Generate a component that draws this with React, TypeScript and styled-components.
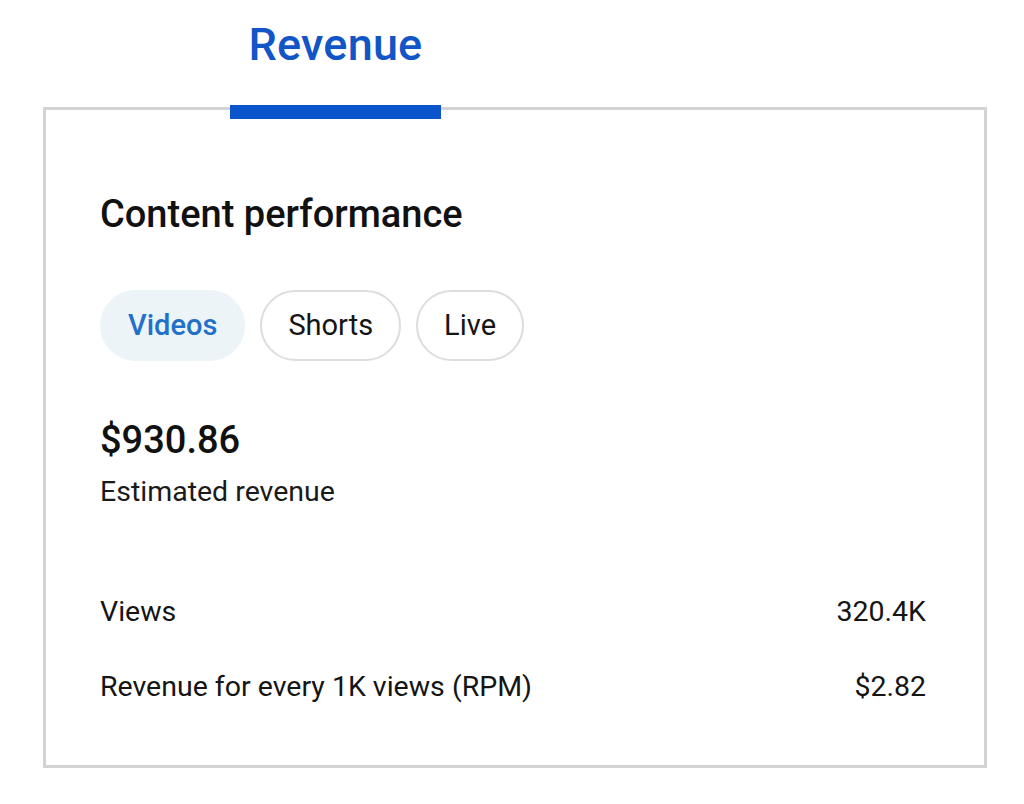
import * as React from 'react'
import styled, { createGlobalStyle } from 'styled-components'

const GlobalStyle = createGlobalStyle`
  html, body {
    margin: 0;
    padding: 0;
    background: #ffffff;
  }
  body {
    font-family: Roboto, 'Noto Sans', 'Liberation Sans', sans-serif;
    color: #141414;
  }
`

const Page = styled.div`
  width: 1024px;
  height: 804px;
  padding-left: 43px;
  box-sizing: border-box;
  display: flex;
  flex-direction: column;
`

// tab sits on top of the card border, bar overlaps it
const TabRow = styled.div`
  display: flex;
  flex-direction: row;
  padding-left: 187px;
  margin-bottom: -12px;
  position: relative;
  z-index: 1;
`

const Tab = styled.div`
  width: 211px;
  display: flex;
  flex-direction: column;
  align-items: center;
`

const TabLabel = styled.div`
  margin-top: 18px;
  font-size: 45px;
  line-height: 54px;
  font-weight: 500;
  color: #1155c6;
  letter-spacing: 0.2px;
`

const TabBar = styled.div`
  margin-top: 33px;
  width: 100%;
  height: 14px;
  flex-shrink: 0;
  background: #0b55cc;
`

const Card = styled.div`
  width: 944px;
  height: 661px;
  box-sizing: border-box;
  border: 3px solid #d3d3d3;
  padding: 0 58px 0 54px;
  display: flex;
  flex-direction: column;
`

const Heading = styled.h2`
  margin: 82px 0 0;
  font-size: 38px;
  line-height: 1.2;
  font-weight: 500;
  color: #111;
`

const ChipRow = styled.div`
  margin-top: 52px;
  display: flex;
  flex-direction: row;
  gap: 15px;
`

const Chip = styled.div<{ $active?: boolean }>`
  height: 71px;
  box-sizing: border-box;
  padding: 0 26px;
  display: flex;
  align-items: center;
  border-radius: 36px;
  font-size: 29px;
  font-weight: ${(p) => (p.$active ? 500 : 400)};
  color: ${(p) => (p.$active ? '#2270c9' : '#151515')};
  background: ${(p) => (p.$active ? '#edf4f8' : '#ffffff')};
  border: 2px solid ${(p) => (p.$active ? '#edf4f8' : '#dddddd')};
`

const Amount = styled.div`
  margin-top: 57px;
  font-size: 38px;
  line-height: 1.2;
  font-weight: 500;
  color: #111;
`

const AmountLabel = styled.div`
  margin-top: 12px;
  font-size: 28.5px;
  line-height: 1.2;
  color: #1a1a1a;
`

const StatRow = styled.div<{ $gap: number }>`
  margin-top: ${(p) => p.$gap}px;
  display: flex;
  flex-direction: row;
  justify-content: space-between;
  font-size: 28.5px;
  line-height: 1.2;
  color: #151515;
`

const chips = ['Videos', 'Shorts', 'Live']

const App = () => {
  return (
    <>
      <GlobalStyle />
      <Page>
        <TabRow>
          <Tab>
            <TabLabel>Revenue</TabLabel>
            <TabBar />
          </Tab>
        </TabRow>
        <Card>
          <Heading>Content performance</Heading>
          <ChipRow>
            {chips.map((c, i) => (
              <Chip key={c} $active={i === 0}>{c}</Chip>
            ))}
          </ChipRow>
          <Amount>$930.86</Amount>
          <AmountLabel>Estimated revenue</AmountLabel>
          <StatRow $gap={86}>
            <span>Views</span>
            <span>320.4K</span>
          </StatRow>
          <StatRow $gap={40}>
            <span>Revenue for every 1K views (RPM)</span>
            <span>$2.82</span>
          </StatRow>
        </Card>
      </Page>
    </>
  )
}

export default App
